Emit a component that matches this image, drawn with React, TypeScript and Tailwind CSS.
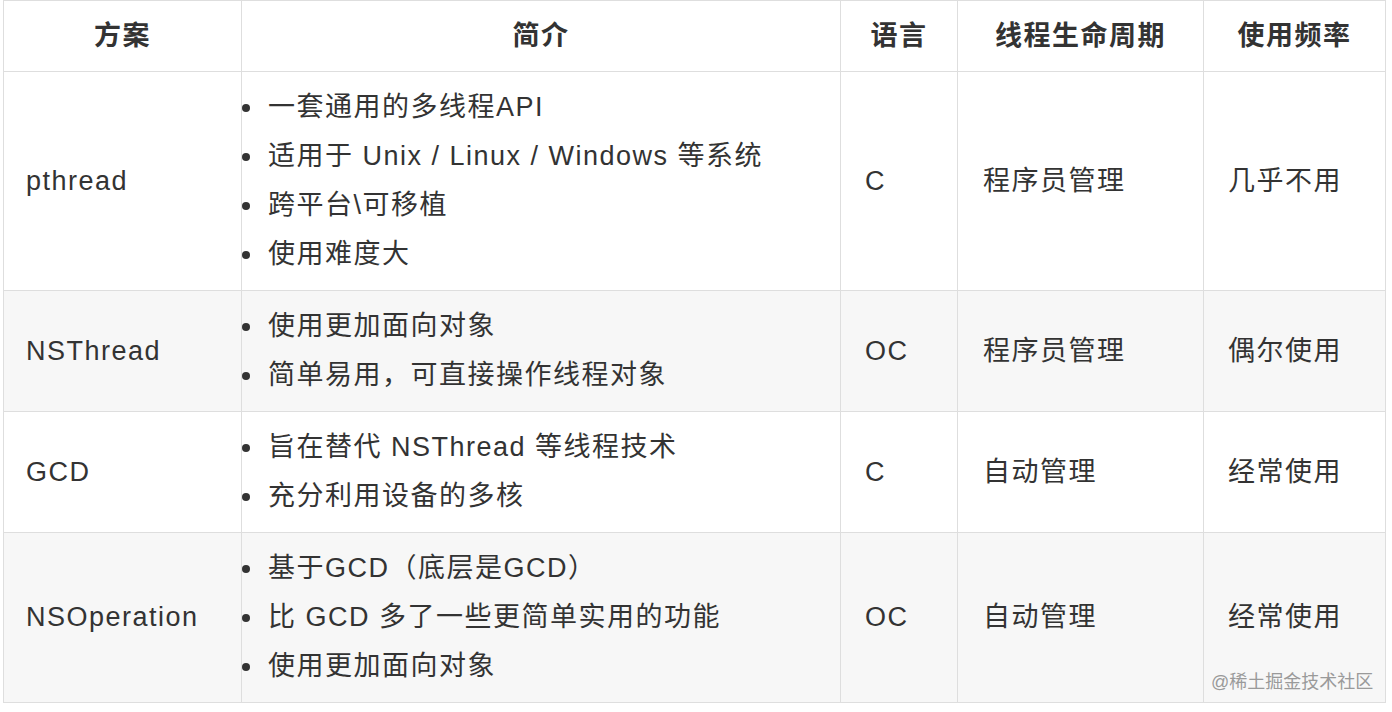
import React from 'react';

type Row = {
    name: string;
    points: string[];
    lang: string;
    life: string;
    freq: string;
    shaded: boolean;
};

const rows: Row[] = [
    {
        name: 'pthread',
        points: ['一套通用的多线程API', '适用于 Unix / Linux / Windows 等系统', '跨平台\\可移植', '使用难度大'],
        lang: 'C',
        life: '程序员管理',
        freq: '几乎不用',
        shaded: false,
    },
    {
        name: 'NSThread',
        points: ['使用更加面向对象', '简单易用，可直接操作线程对象'],
        lang: 'OC',
        life: '程序员管理',
        freq: '偶尔使用',
        shaded: true,
    },
    {
        name: 'GCD',
        points: ['旨在替代 NSThread 等线程技术', '充分利用设备的多核'],
        lang: 'C',
        life: '自动管理',
        freq: '经常使用',
        shaded: false,
    },
    {
        name: 'NSOperation',
        points: ['基于GCD（底层是GCD）', '比 GCD 多了一些更简单实用的功能', '使用更加面向对象'],
        lang: 'OC',
        life: '自动管理',
        freq: '经常使用',
        shaded: true,
    },
];

const cell = 'border border-[#dedede] align-middle';

const App: React.FC = () => {
    return (
        <div
            className="relative w-[1392px] h-[712px] bg-white text-[#333] text-[27px] tracking-[1.5px]"
            style={{ fontFamily: '"Liberation Sans", "Noto Sans CJK SC", sans-serif' }}
        >
            <table className="ml-[3px] border-collapse table-fixed w-[1382px]">
                <thead>
                    <tr className="h-[71px] bg-white">
                        <th className={`${cell} w-[238px] font-bold text-center`}>方案</th>
                        <th className={`${cell} w-[599px] font-bold text-center`}>简介</th>
                        <th className={`${cell} w-[117px] font-bold text-center`}>语言</th>
                        <th className={`${cell} w-[246px] font-bold text-center`}>线程生命周期</th>
                        <th className={`${cell} w-[182px] font-bold text-center`}>使用频率</th>
                    </tr>
                </thead>
                <tbody>
                    {rows.map((r) => (
                        <tr key={r.name} className={r.shaded ? 'bg-[#f7f7f7]' : 'bg-white'}>
                            <td className={`${cell} pl-[22px]`}>{r.name}</td>
                            <td className={`${cell} py-[11px] pl-0`}>
                                {r.points.map((p) => (
                                    <div key={p} className="flex items-center h-[49px] leading-[49px]">
                                        <span className="w-[8px] h-[8px] rounded-full bg-[#333] mr-[18px] shrink-0"></span>
                                        <span className="whitespace-nowrap">{p}</span>
                                    </div>
                                ))}
                            </td>
                            <td className={`${cell} pl-[24px]`}>{r.lang}</td>
                            <td className={`${cell} pl-[25px]`}>{r.life}</td>
                            <td className={`${cell} pl-[24px]`}>{r.freq}</td>
                        </tr>
                    ))}
                </tbody>
            </table>

            {/* watermark */}
            <div className="absolute left-[1211px] top-[669px] text-[18px] tracking-normal text-[#9a9a9a] whitespace-nowrap">
                @稀土掘金技术社区
            </div>
        </div>
    );
};

export default App;
